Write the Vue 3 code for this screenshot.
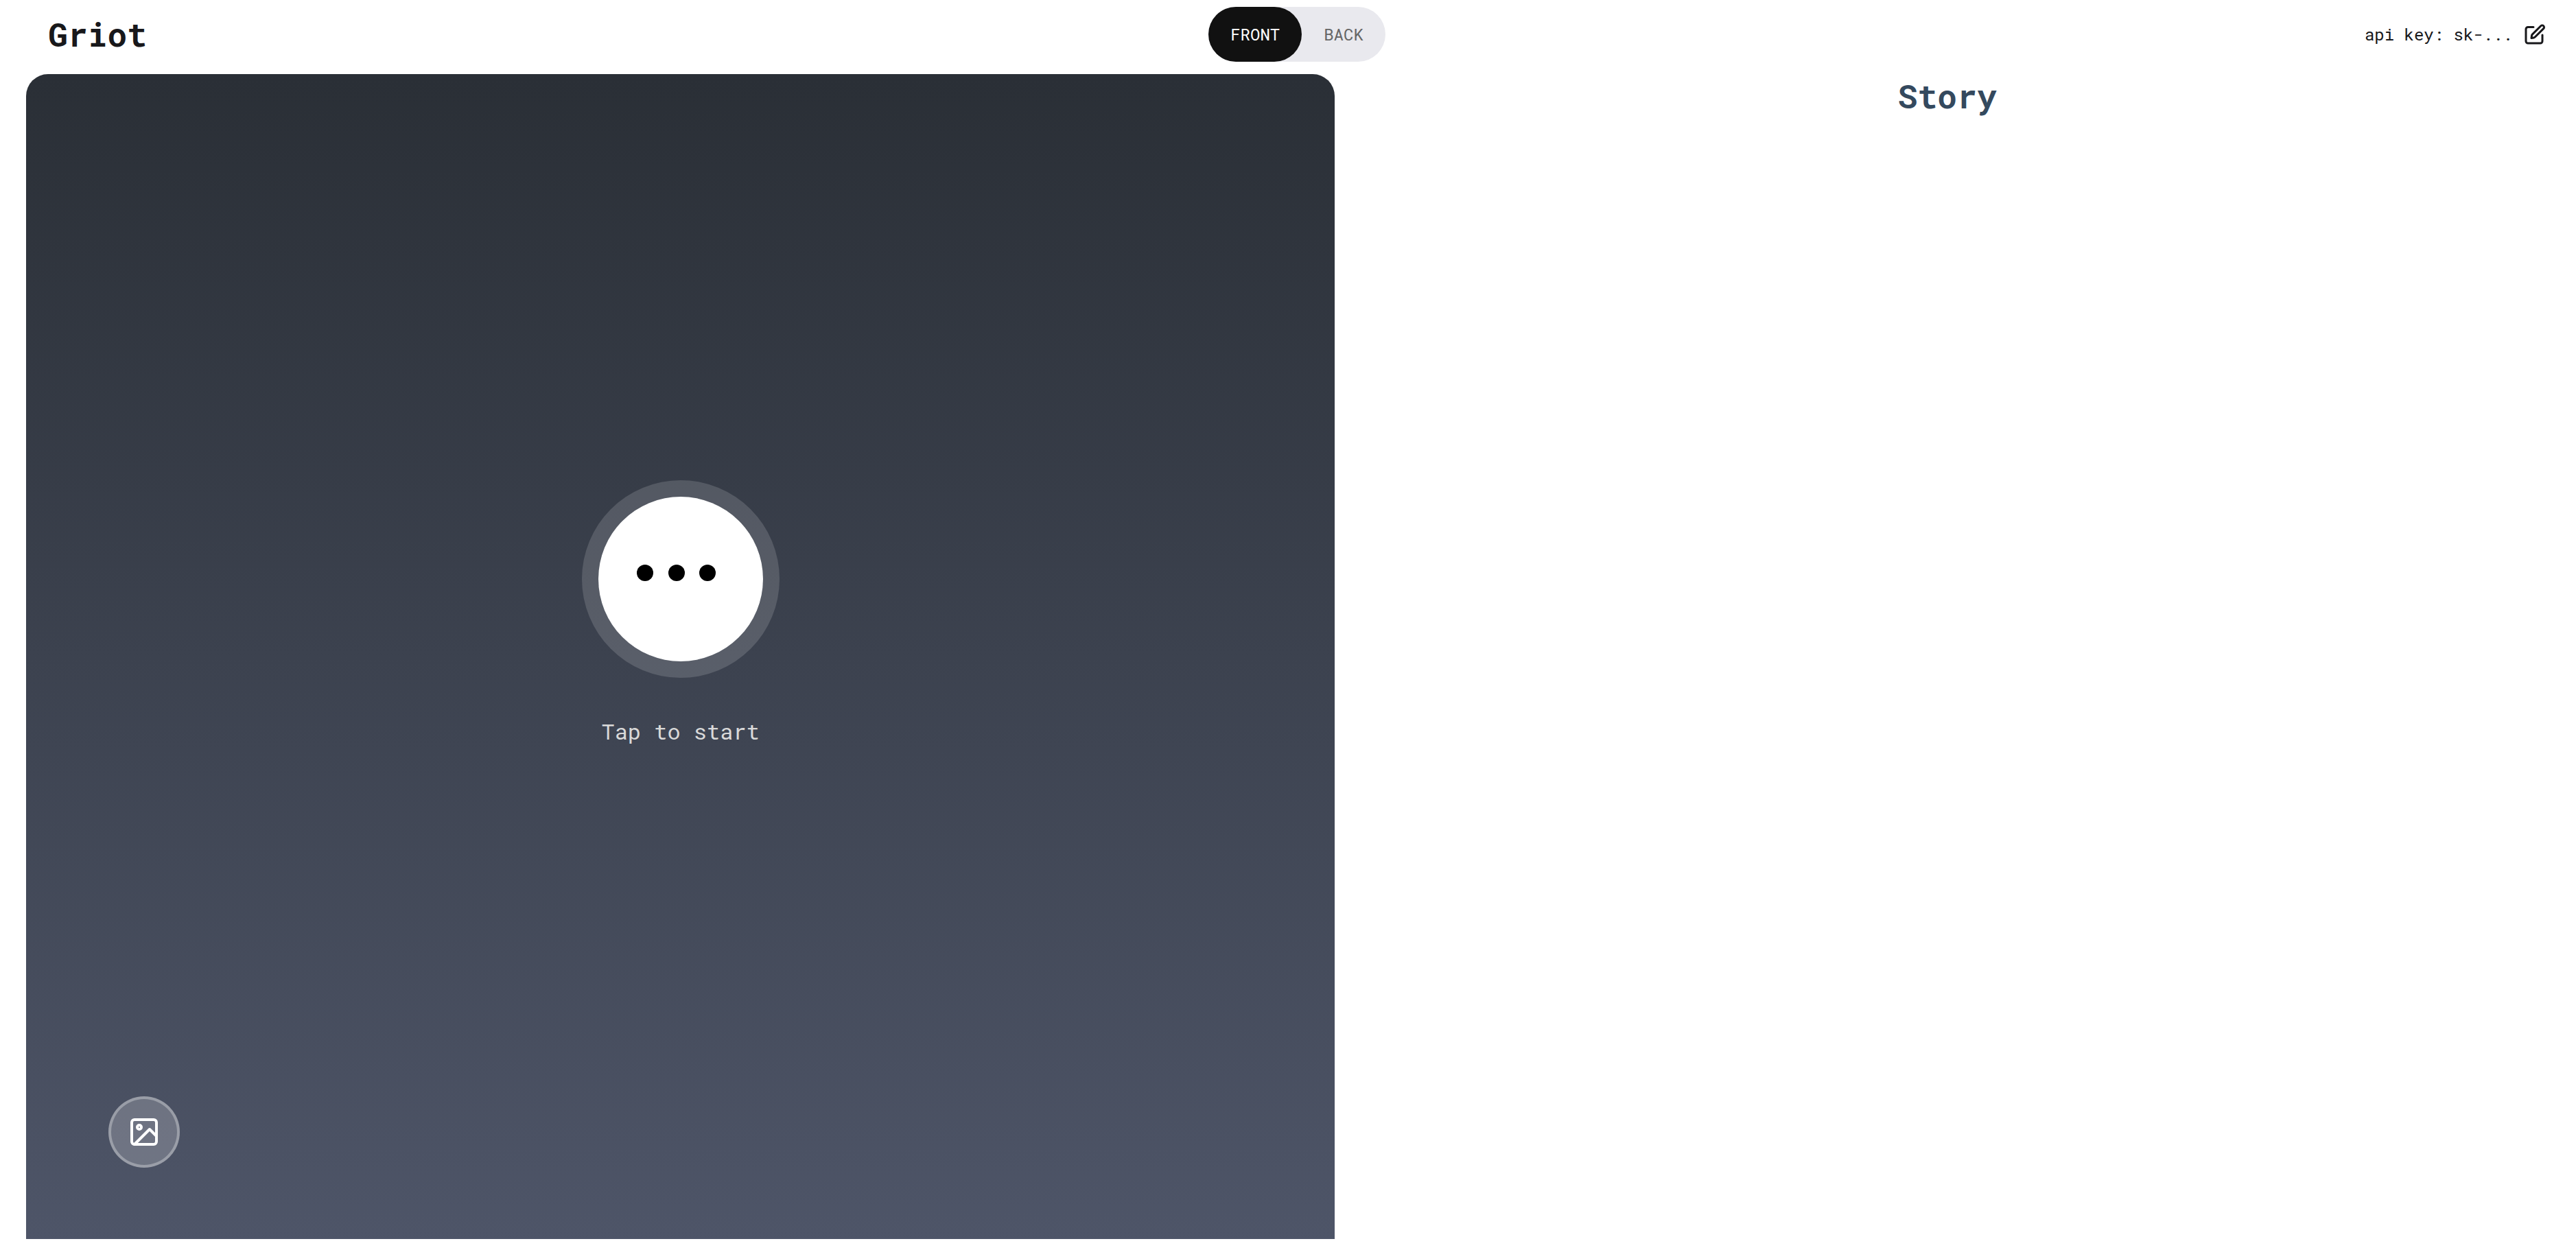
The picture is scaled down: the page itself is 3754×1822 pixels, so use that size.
<script setup>
import { ref } from 'vue'

const side = ref('front')
const sides = ['front', 'back']
</script>

<template>
  <div class="app">
    <header class="header">
      <h1 class="brand">Griot</h1>
      <div class="toggle" role="group" aria-label="Card side">
        <button
          v-for="name in sides"
          :key="name"
          type="button"
          class="toggle-option"
          :class="{ active: side === name }"
          :aria-pressed="side === name"
          @click="side = name"
        >{{ name.toUpperCase() }}</button>
      </div>
      <button type="button" class="api-key">
        <span>api key: sk-...</span>
        <svg class="edit-icon" viewBox="0 0 32 32" aria-hidden="true">
          <path d="M14 5.5H6a3 3 0 0 0-3 3V26a3 3 0 0 0 3 3H24a3 3 0 0 0 3-3V17" />
          <path d="M11 21.500L11.500 18Q11.700 16.800 12.600 15.900L24.800 3.700a2.700 2.700 0 0 1 3.900 3.900L16.500 19.800Q15.600 20.700 14.400 20.900Z" />
        </svg>
      </button>
    </header>

    <main class="columns">
      <section class="panel">
        <div class="stage">
          <button type="button" class="start" aria-labelledby="start-label">
            <svg class="dots" viewBox="0 0 240 240" aria-hidden="true">
              <circle cx="68" cy="111" r="12" />
              <circle cx="114" cy="111" r="12" />
              <circle cx="159" cy="111" r="12" />
            </svg>
          </button>
          <p id="start-label" class="hint">Tap to start</p>
        </div>
        <div class="tools">
          <button type="button" class="image-button" aria-label="Add image">
            <svg class="image-icon" viewBox="0 0 24 24" aria-hidden="true">
              <rect x="3" y="3" width="18" height="18" rx="2" />
              <circle cx="8.5" cy="8.5" r="1.5" />
              <path d="M21 15l-5-5L5 21" />
            </svg>
          </button>
        </div>
      </section>
      <section class="story">
        <h2 class="story-title">Story</h2>
      </section>
    </main>
  </div>
</template>

<style>
body {
  margin: 0;
  background: #fff;
}
</style>

<style scoped>
.app {
  display: flex;
  flex-direction: column;
  min-height: 100vh;
  box-sizing: border-box;
  padding-bottom: 16px;
  color: #18181b;
  font-family: "Roboto Mono", "DejaVu Sans Mono", monospace;
}

button {
  margin: 0;
  border: 0;
  padding: 0;
  background: none;
  color: inherit;
  font: inherit;
  cursor: pointer;
}

.header {
  display: grid;
  grid-template-columns: 1fr auto 1fr;
  align-items: center;
  height: 100px;
  padding: 0 44px 0 70px;
}

.brand,
.story-title {
  margin: 0;
  font-size: 48px;
  line-height: 64px;
  font-weight: 700;
}

.toggle {
  display: flex;
  border-radius: 40px;
  background: #e9e9ee;
}

.toggle-option {
  height: 80px;
  padding: 0 32px;
  border-radius: 40px;
  color: #666;
  font-size: 24px;
}

.toggle-option.active {
  background: #111;
  color: #fff;
}

.api-key {
  display: flex;
  justify-self: end;
  align-items: center;
  gap: 16px;
  font-size: 24px;
  line-height: 32px;
}

.edit-icon,
.image-icon {
  display: block;
  fill: none;
  stroke: currentColor;
  stroke-linecap: round;
  stroke-linejoin: round;
}

.edit-icon {
  width: 32px;
  height: 32px;
  stroke-width: 3px;
}

.columns {
  display: grid;
  flex: 1;
  grid-template-columns: 38fr 35fr;
  gap: 14px;
  padding: 8px 38px 0;
}

.panel {
  display: flex;
  flex-direction: column;
  border-radius: 32px 32px 0 0;
  background: linear-gradient(#2a2f36, #4e5568);
  color: #fff;
}

.stage {
  display: flex;
  flex: 1;
  flex-direction: column;
  align-items: center;
  justify-content: center;
  gap: 54px;
  padding-top: 84px;
}

.start {
  border: 24px solid rgba(255, 255, 255, 0.15);
  border-radius: 50%;
  background: #fff;
  background-clip: padding-box;
}

.dots {
  display: block;
  width: 240px;
  height: 240px;
  fill: #000;
}

.hint {
  margin: 0;
  color: #d9d9d9;
  font-size: 32px;
  line-height: 48px;
}

.tools {
  padding: 0 120px 104px;
}

.image-button {
  display: flex;
  align-items: center;
  justify-content: center;
  box-sizing: border-box;
  width: 104px;
  height: 104px;
  border: 4px solid rgba(255, 255, 255, 0.3);
  border-radius: 50%;
  background: rgba(255, 255, 255, 0.2);
  background-clip: border-box;
}

.image-icon {
  width: 48px;
  height: 48px;
  stroke-width: 2px;
}

.story-title {
  color: #34495e;
  text-align: center;
}
</style>
